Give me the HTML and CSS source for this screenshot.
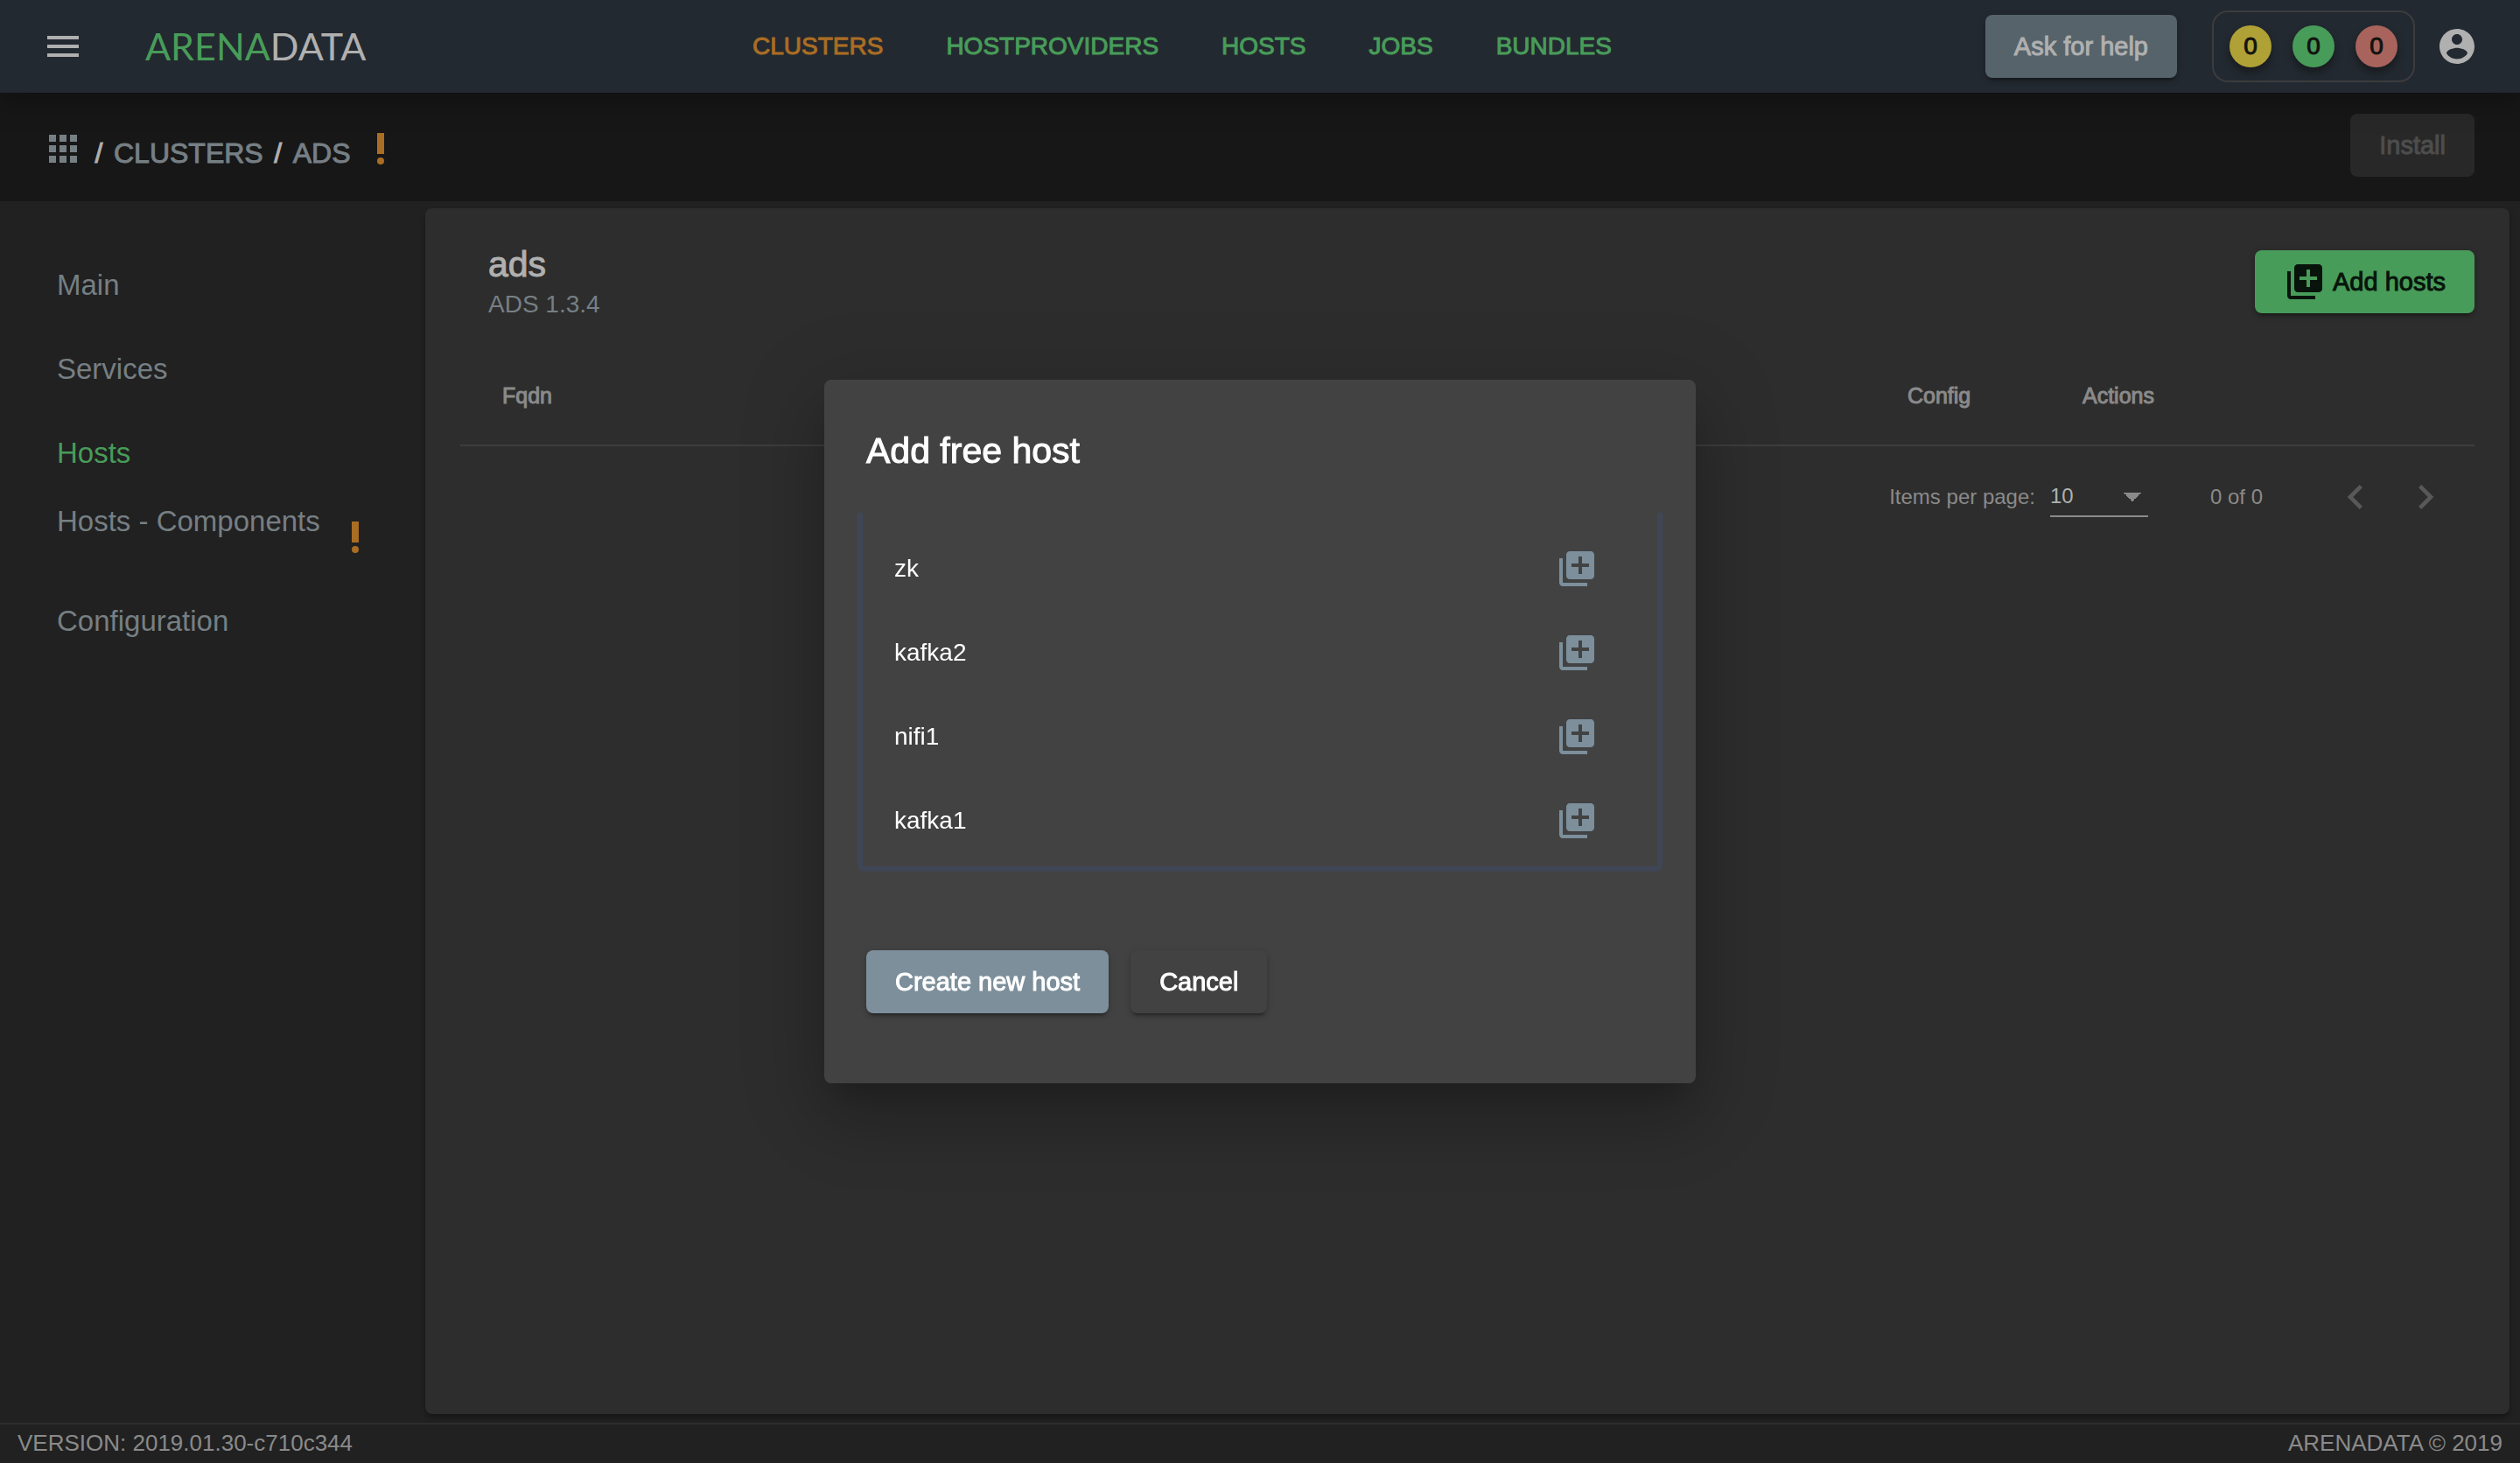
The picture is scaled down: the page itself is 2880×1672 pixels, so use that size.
FILE: index.html
```html
<!DOCTYPE html>
<html lang="en">
<head>
<meta charset="utf-8">
<meta name="viewport" content="width=device-width, initial-scale=1">
<title>Arenadata - ads hosts</title>
<link rel="stylesheet" href="styles.css">
</head>
<body>
<svg class="sprite" aria-hidden="true">
  <symbol id="menu" viewBox="0 0 24 24"><path d="M3 18h18v-2H3v2zm0-5h18v-2H3v2zm0-7v2h18V6H3z"/></symbol>
  <symbol id="apps" viewBox="0 0 24 24"><path d="M4 8h4V4H4v4zm6 12h4v-4h-4v4zm-6 0h4v-4H4v4zm0-6h4v-4H4v4zm6 0h4v-4h-4v4zm6-10v4h4V4h-4zm-6 4h4V4h-4v4zm6 6h4v-4h-4v4zm0 6h4v-4h-4v4z"/></symbol>
  <symbol id="alert" viewBox="0 0 24 24"><circle cx="12" cy="19" r="2"/><path d="M10 3h4v12h-4z"/></symbol>
  <symbol id="account" viewBox="0 0 24 24"><path d="M12 2C6.48 2 2 6.48 2 12s4.480 10 10 10 10-4.480 10-10S17.520 2 12 2zm0 3c1.660 0 3 1.340 3 3s-1.340 3-3 3-3-1.340-3-3 1.340-3 3-3zm0 14.200c-2.500 0-4.710-1.280-6-3.220.03-1.990 4-3.080 6-3.080 1.990 0 5.970 1.090 6 3.080-1.290 1.940-3.500 3.220-6 3.220z"/></symbol>
  <symbol id="add" viewBox="0 0 24 24"><path d="M4 6H2v14c0 1.100.9 2 2 2h14v-2H4V6zm16-4H8c-1.100 0-2 .9-2 2v12c0 1.100.9 2 2 2h12c1.100 0 2-.9 2-2V4c0-1.100-.9-2-2-2zm-1 9h-4v4h-2v-4H9V9h4V5h2v4h4v2z"/></symbol>
  <symbol id="prev" viewBox="0 0 24 24"><path d="M15.410 7.410L14 6l-6 6 6 6 1.410-1.410L10.830 12z"/></symbol>
  <symbol id="next" viewBox="0 0 24 24"><path d="M10 6L8.590 7.410 13.170 12l-4.580 4.590L10 18l6-6z"/></symbol>
</svg>

<header class="topbar">
  <button class="icon-button menu-button" aria-label="Menu"><svg class="icon"><use href="#menu"/></svg></button>
  <a class="logo" href="#"><span class="logo-green">ARENA</span>DATA</a>
  <nav class="main-nav">
    <a class="active" href="#">CLUSTERS</a>
    <a href="#">HOSTPROVIDERS</a>
    <a href="#">HOSTS</a>
    <a href="#">JOBS</a>
    <a href="#">BUNDLES</a>
  </nav>
  <button class="button help-button">Ask for help</button>
  <div class="counters">
    <span class="counter yellow">0</span>
    <span class="counter green">0</span>
    <span class="counter red">0</span>
  </div>
  <button class="icon-button" aria-label="Account"><svg class="icon"><use href="#account"/></svg></button>
</header>

<div class="crumb-bar">
  <nav class="crumbs" aria-label="Breadcrumb">
    <a href="#" aria-label="Home"><svg class="icon"><use href="#apps"/></svg></a>
    <span class="slash">/</span>
    <a href="#">CLUSTERS</a>
    <span class="slash">/</span>
    <a href="#">ADS</a>
    <svg class="icon alert"><use href="#alert"/></svg>
  </nav>
  <button class="button install-button" disabled>Install</button>
</div>

<div class="content">
  <nav class="sidebar">
    <a href="#">Main</a>
    <a href="#">Services</a>
    <a class="active" href="#">Hosts</a>
    <a class="with-alert" href="#"><span>Hosts - Components</span><svg class="icon alert"><use href="#alert"/></svg></a>
    <a href="#">Configuration</a>
  </nav>
  <main class="panel">
    <div class="panel-head">
      <div>
        <h1>ads</h1>
        <p>ADS 1.3.4</p>
      </div>
      <button class="button add-button"><svg class="icon"><use href="#add"/></svg>Add hosts</button>
    </div>
    <table class="hosts">
      <thead>
        <tr><th scope="col">Fqdn</th><th class="col-config" scope="col">Config</th><th class="col-actions" scope="col">Actions</th></tr>
      </thead>
    </table>
    <div class="paginator">
      <label for="page-size">Items per page:</label>
      <div class="select">
        <select id="page-size"><option>10</option><option>25</option><option>50</option></select>
      </div>
      <span class="range">0 of 0</span>
      <button class="page-button" aria-label="Previous page" disabled><svg><use href="#prev"/></svg></button>
      <button class="page-button" aria-label="Next page" disabled><svg><use href="#next"/></svg></button>
    </div>
  </main>
</div>

<footer class="footer"><span>VERSION: 2019.01.30-c710c344</span><span>ARENADATA © 2019</span></footer>

<div class="overlay">
  <section class="dialog" role="dialog" aria-modal="true" aria-labelledby="dialog-title">
    <h2 id="dialog-title">Add free host</h2>
    <ul class="host-list">
      <li><span>zk</span><button class="icon-button" aria-label="Add zk"><svg class="icon"><use href="#add"/></svg></button></li>
      <li><span>kafka2</span><button class="icon-button" aria-label="Add kafka2"><svg class="icon"><use href="#add"/></svg></button></li>
      <li><span>nifi1</span><button class="icon-button" aria-label="Add nifi1"><svg class="icon"><use href="#add"/></svg></button></li>
      <li><span>kafka1</span><button class="icon-button" aria-label="Add kafka1"><svg class="icon"><use href="#add"/></svg></button></li>
    </ul>
    <div class="dialog-actions">
      <button class="button create-button">Create new host</button>
      <button class="button cancel-button">Cancel</button>
    </div>
  </section>
</div>
</body>
</html>
```
FILE: styles.css
```css
* { box-sizing: border-box; }

:root {
  --green: #489c59;
  --orange: #aa6d24;
  --muted: #767f84;
  --light: #b0b0b0;
  --grey: #8a8a8a;
}

body {
  margin: 0;
  min-height: 100vh;
  display: flex;
  flex-direction: column;
  background: #212121;
  color: var(--light);
  font: 28px/36px "Liberation Sans", Arial, sans-serif;
}

h1, h2, p, ul { margin: 0; padding: 0; }
a { color: inherit; text-decoration: none; }
button, select { font: inherit; color: inherit; border: 0; background: none; padding: 0; margin: 0; }

.sprite { display: none; }
.icon { display: block; flex: none; width: 48px; height: 48px; fill: currentColor; }
.alert { color: var(--orange); }
.icon-button { flex: none; display: block; }

/* Medium weight: the regular face with a thin outline */
.main-nav, .crumbs, .button, .counter, h1, h2, th { -webkit-text-stroke: 1px currentColor; }

.button {
  flex: none;
  height: 72px;
  padding: 0 33px;
  border-radius: 8px;
  font-size: 29px;
  white-space: nowrap;
  box-shadow: 0 6px 2px -4px rgba(0, 0, 0, .2), 0 4px 4px rgba(0, 0, 0, .14), 0 2px 10px rgba(0, 0, 0, .12);
}

/* Top bar */
.topbar {
  position: relative;
  display: flex;
  align-items: center;
  height: 106px;
  padding: 0 48px;
  background: #232930;
  box-shadow: 0 8px 32px rgba(0, 0, 0, .35);
}
.logo { margin-left: 70px; width: 256px; font: 43px/48px Lato, sans-serif; white-space: nowrap; }
.logo-green { color: var(--green); }
.main-nav { flex: 1; display: flex; gap: 72px; margin-left: 438px; color: var(--green); }
.main-nav .active { color: var(--orange); }
.help-button { background: #56636b; }
.counters {
  display: flex;
  gap: 24px;
  margin: 0 24px 0 40px;
  padding: 15px 18px;
  border: 2px solid #3c3c3e;
  border-radius: 18px;
}
.counter {
  width: 48px;
  height: 48px;
  border-radius: 50%;
  line-height: 48px;
  text-align: center;
  color: #12130f;
  box-shadow: 0 6px 10px rgba(0, 0, 0, .35);
}
.yellow { background: #b0a136; }
.green { background: var(--green); }
.red { background: #a8645c; }

/* Breadcrumbs */
.crumb-bar {
  display: flex;
  justify-content: space-between;
  align-items: flex-end;
  padding: 24px 52px 28px 48px;
  background: #171717;
}
.crumbs {
  display: flex;
  align-items: flex-end;
  padding-bottom: 8px;
  color: var(--muted);
  font-size: 32px;
  line-height: 38px;
}
.slash { width: 34px; text-align: center; color: var(--light); }
.crumbs .alert { margin-left: 10px; }
.install-button { background: #282828; color: #4d4d4d; box-shadow: none; }

/* Body */
.content { flex: 1; display: flex; padding: 8px 12px 10px 0; }
.sidebar {
  flex: none;
  width: 486px;
  padding: 40px 0 0 65px;
  color: var(--muted);
  font-size: 33px;
}
.sidebar a { display: flex; align-items: center; height: 96px; }
.sidebar .active { color: var(--green); }
.sidebar .with-alert span { align-self: flex-start; padding-top: 12px; width: 317px; }

.panel {
  flex: 1;
  padding: 40px;
  border-radius: 8px;
  background: #2d2d2d;
  box-shadow: 0 4px 6px rgba(0, 0, 0, .35);
}
.panel-head { display: flex; justify-content: space-between; align-items: center; padding-left: 32px; }
h1 { font-size: 41px; line-height: 48px; font-weight: 400; }
.panel-head p { margin-top: 4px; color: var(--muted); }
.add-button { display: flex; align-items: center; gap: 8px; background: var(--green); color: #08140b; }

.hosts { width: 100%; margin-top: 30px; border-collapse: separate; border-spacing: 0; }
th {
  height: 114px;
  padding: 0;
  border-bottom: 2px solid #3d3d3d;
  color: var(--grey);
  font-size: 25px;
  font-weight: 400;
  text-align: left;
}
th:first-child { padding-left: 48px; }
.col-config { width: 200px; }
.col-actions { width: 448px; }

.paginator {
  display: flex;
  align-items: center;
  justify-content: flex-end;
  height: 116px;
  padding-right: 16px;
  color: var(--grey);
  font-size: 24px;
}
.select {
  display: flex;
  width: 112px;
  height: 46px;
  margin: 0 71px 0 17px;
  border-bottom: 2px solid var(--grey);
  color: var(--light);
}
.select select {
  width: 100%;
  appearance: none;
  background: linear-gradient(to bottom left, var(--grey) 50%, transparent 50%) 84px 18px / 10px 10px no-repeat,
              linear-gradient(to bottom right, var(--grey) 50%, transparent 50%) 94px 18px / 10px 10px no-repeat;
}
.range { margin-right: 66px; }
.page-button { width: 80px; height: 80px; padding: 12px; }
.page-button svg { display: block; width: 56px; height: 56px; fill: #585858; }

.footer {
  display: flex;
  justify-content: space-between;
  height: 46px;
  padding: 0 20px;
  border-top: 2px solid #2d2d2d;
  color: var(--grey);
  font-size: 26px;
  line-height: 42px;
}

/* Dialog */
.overlay { position: fixed; inset: 0; display: flex; align-items: center; justify-content: center; }
.dialog {
  width: 996px;
  max-width: 90%;
  padding: 48px 48px 80px;
  border-radius: 8px;
  background: #424242;
  color: #fff;
  box-shadow: 0 22px 30px -14px rgba(0, 0, 0, .2), 0 48px 76px 6px rgba(0, 0, 0, .14), 0 18px 92px 16px rgba(0, 0, 0, .12);
}
h2 { font-size: 41px; line-height: 66px; font-weight: 400; }
.host-list {
  margin: 38px -10px 0;
  padding: 16px 0 4px;
  border: 6px solid #3f4656;
  border-top: 0;
  border-radius: 0 0 8px 8px;
  list-style: none;
}
.host-list li { display: flex; align-items: center; justify-content: space-between; height: 96px; padding: 0 68px 0 36px; }
.host-list .icon-button { color: #7c8f9b; }
.dialog-actions { display: flex; gap: 25px; margin-top: 90px; }
.create-button { background: #7c8f9b; }
.cancel-button { background: #424242; }
```
